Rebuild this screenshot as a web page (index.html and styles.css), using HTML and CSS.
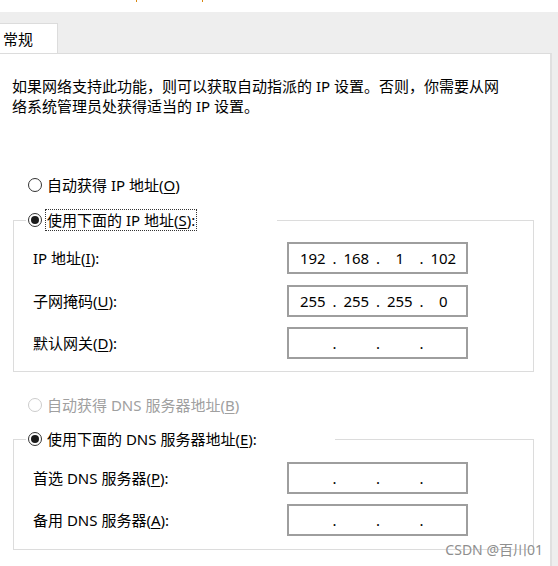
FILE: index.html
```html
<!DOCTYPE html>
<html lang="zh-CN">
<head>
<meta charset="utf-8">
<title>IPv4 属性</title>
<link rel="stylesheet" href="styles.css">
</head>
<body>
<div class="topstrip"><span class="mark m1"></span><span class="mark m2"></span></div>
<div class="tabbar"><div class="tab">常规</div></div>
<div class="panel">
  <p class="intro">如果网络支持此功能，则可以获取自动指派的 IP 设置。否则，你需要从网<br>络系统管理员处获得适当的 IP 设置。</p>

  <div class="radio-row r-auto-ip">
    <span class="radio"></span><span class="rlabel">自动获得 IP 地址(<u>O</u>)</span>
  </div>

  <div class="group g-ip">
    <div class="group-head">
      <span class="seg-l"></span>
      <div class="legend legend-ip">
        <span class="radio checked"></span><span class="rlabel focus">使用下面的 IP 地址(<u>S</u>):</span>
      </div>
      <span class="seg-r"></span>
    </div>
    <div class="group-body gb-ip">
      <div class="row">
        <span class="label">IP 地址(<u>I</u>):</span>
        <div class="ipbox"><span class="seg">192</span><span class="dot">.</span><span class="seg">168</span><span class="dot">.</span><span class="seg">1</span><span class="dot">.</span><span class="seg">102</span></div>
      </div>
      <div class="row">
        <span class="label">子网掩码(<u>U</u>):</span>
        <div class="ipbox"><span class="seg">255</span><span class="dot">.</span><span class="seg">255</span><span class="dot">.</span><span class="seg">255</span><span class="dot">.</span><span class="seg">0</span></div>
      </div>
      <div class="row">
        <span class="label">默认网关(<u>D</u>):</span>
        <div class="ipbox"><span class="seg"></span><span class="dot">.</span><span class="seg"></span><span class="dot">.</span><span class="seg"></span><span class="dot">.</span><span class="seg"></span></div>
      </div>
    </div>
  </div>

  <div class="radio-row r-auto-dns disabled">
    <span class="radio"></span><span class="rlabel">自动获得 DNS 服务器地址(<u>B</u>)</span>
  </div>

  <div class="group g-dns">
    <div class="group-head">
      <span class="seg-l"></span>
      <div class="legend legend-dns">
        <span class="radio checked"></span><span class="rlabel">使用下面的 DNS 服务器地址(<u>E</u>):</span>
      </div>
      <span class="seg-r"></span>
    </div>
    <div class="group-body gb-dns">
      <div class="row">
        <span class="label">首选 DNS 服务器(<u>P</u>):</span>
        <div class="ipbox"><span class="seg"></span><span class="dot">.</span><span class="seg"></span><span class="dot">.</span><span class="seg"></span><span class="dot">.</span><span class="seg"></span></div>
      </div>
      <div class="row">
        <span class="label">备用 DNS 服务器(<u>A</u>):</span>
        <div class="ipbox"><span class="seg"></span><span class="dot">.</span><span class="seg"></span><span class="dot">.</span><span class="seg"></span><span class="dot">.</span><span class="seg"></span></div>
      </div>
    </div>
  </div>

  <div class="watermark">CSDN @百川01</div>
</div>
</body>
</html>
```

FILE: styles.css
```css
* { box-sizing: border-box; }

html, body {
  margin: 0;
  padding: 0;
}

body {
  width: 558px;
  height: 566px;
  overflow: hidden;
  background: #eeeeee;
  font-family: "Noto Sans", "Noto Sans CJK SC", sans-serif;
  font-size: 15px;
  line-height: 20px;
  color: #000000;
}

u { text-decoration: underline; text-underline-offset: 2px; }

.topstrip {
  height: 12px;
  background: #ffffff;
  display: flex;
  align-items: flex-start;
}
.mark {
  width: 1px;
  height: 2px;
  background: #d8860e;
}
.m1 { margin-left: 136px; }
.m2 { margin-left: 65px; }

.tabbar {
  height: 41px;
  background: #eeeeee;
  display: flex;
  align-items: flex-end;
}
.tab {
  width: 58px;
  height: 30px;
  background: #ffffff;
  border-top: 1px solid #dcdcdc;
  border-right: 1px solid #dcdcdc;
  padding-left: 3px;
  display: flex;
  align-items: center;
}

.panel {
  position: relative;
  width: 552px;
  height: 513px;
  background: #ffffff;
  border-top: 1px solid #dcdcdc;
  border-right: 2px solid #e0e0e0;
  padding-top: 22px;
}

.intro {
  margin: 0 0 0 12px;
  line-height: 20px;
}

.radio-row {
  display: flex;
  align-items: center;
  height: 22px;
  padding-left: 28px;
}
.r-auto-ip { margin-top: 58px; }
.r-auto-dns { margin-top: 22px; }

.radio {
  width: 14px;
  height: 14px;
  border: 1px solid #333333;
  border-radius: 50%;
  background: #ffffff;
  display: flex;
  align-items: center;
  justify-content: center;
  flex: none;
}
.radio.checked::after {
  content: "";
  width: 8px;
  height: 8px;
  border-radius: 50%;
  background: #1a1a1a;
}
.rlabel {
  margin-left: 3px;
  padding: 0 1px;
  line-height: 20px;
  border: 1px solid transparent;
  white-space: nowrap;
}
.rlabel.focus {
  border: 1px dotted #333333;
}
.disabled .radio { border-color: #cccccc; }
.disabled .rlabel { color: #a0a0a0; }

.group {
  margin-left: 13px;
  width: 521px;
}
.g-ip { margin-top: 13px; }
.g-dns { margin-top: 12px; }

.group-head {
  display: flex;
  height: 22px;
}
.seg-l {
  width: 13px;
  height: 11px;
  align-self: flex-end;
  border-top: 1px solid #dcdcdc;
  border-left: 1px solid #dcdcdc;
}
.seg-r {
  flex: 1;
  height: 11px;
  align-self: flex-end;
  border-top: 1px solid #dcdcdc;
  border-right: 1px solid #dcdcdc;
}
.legend {
  display: flex;
  align-items: center;
  padding-left: 2px;
}
.legend-ip { width: 251px; }
.legend-dns { width: 309px; }

.group-body {
  border-left: 1px solid #dcdcdc;
  border-right: 1px solid #dcdcdc;
  border-bottom: 1px solid #dcdcdc;
  padding-left: 19px;
  display: flex;
  flex-direction: column;
}
.gb-ip {
  padding-top: 11px;
  padding-bottom: 12px;
  gap: 10.5px;
}
.gb-dns {
  padding-top: 12px;
  padding-bottom: 13px;
  gap: 10px;
}

.row {
  display: flex;
  align-items: center;
  height: 32px;
}
.label {
  width: 254px;
  flex: none;
}

.ipbox {
  width: 181px;
  height: 32px;
  border: 2px solid #9e9e9e;
  background: #ffffff;
  display: flex;
  align-items: center;
  padding-left: 4px;
}
.seg {
  width: 39.5px;
  text-align: center;
}
.dot {
  width: 4px;
  text-align: center;
}

.watermark {
  position: absolute;
  right: 7px;
  top: 487px;
  font-size: 14px;
  line-height: 18px;
  color: #8e8e8e;
  text-shadow: 0 0 1px #ffffff;
}
```
